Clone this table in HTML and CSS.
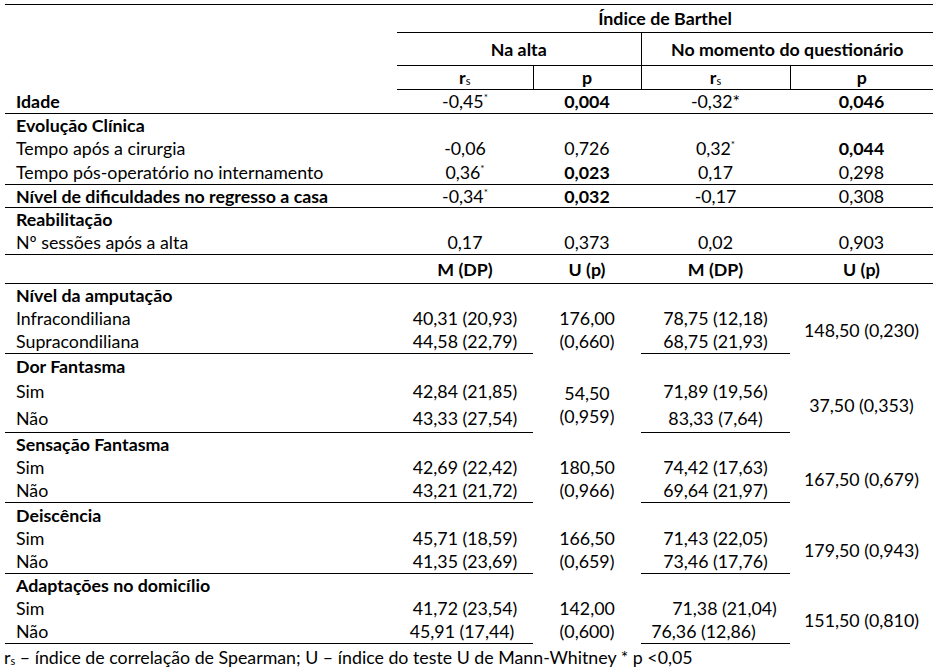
FILE: index.html
```html
<!DOCTYPE html>
<html lang="pt">
<head>
<meta charset="utf-8">
<title>Índice de Barthel</title>
<link rel="stylesheet" href="styles.css">
</head>
<body>
<div class="page">
<table class="stats">
  <colgroup>
    <col class="c0"><col class="c1"><col class="c2"><col class="c3"><col class="c4">
  </colgroup>
  <tr class="r-top h27">
    <td class="lbl" rowspan="3"></td>
    <td colspan="4" class="b bb">Índice de Barthel</td>
  </tr>
  <tr class="h32">
    <td colspan="2" class="b bb vr">Na alta</td>
    <td colspan="2" class="b bb">No momento do questionário</td>
  </tr>
  <tr class="h23 line">
    <td class="b vr">r<span class="sub">s</span></td>
    <td class="b vr">p</td>
    <td class="b vr">r<span class="sub">s</span></td>
    <td class="b">p</td>
  </tr>
  <tr class="h23 line">
    <td class="lbl b">Idade</td>
    <td>-0,45<sup>*</sup></td>
    <td class="b">0,004</td>
    <td>-0,32*</td>
    <td class="b">0,046</td>
  </tr>
  <tr class="h23">
    <td class="lbl b">Evolução Clínica</td><td></td><td></td><td></td><td></td>
  </tr>
  <tr class="h23">
    <td class="lbl">Tempo após a cirurgia</td>
    <td>-0,06</td><td>0,726</td><td>0,32<sup>*</sup></td><td class="b">0,044</td>
  </tr>
  <tr class="h24 line">
    <td class="lbl">Tempo pós-operatório no internamento</td>
    <td>0,36<sup>*</sup></td><td class="b">0,023</td><td>0,17</td><td>0,298</td>
  </tr>
  <tr class="h22 line">
    <td class="lbl b">Nível de dificuldades no regresso a casa</td>
    <td>-0,34<sup>*</sup></td><td class="b">0,032</td><td>-0,17</td><td>0,308</td>
  </tr>
  <tr class="h23">
    <td class="lbl b">Reabilitação</td><td></td><td></td><td></td><td></td>
  </tr>
  <tr class="h23 line">
    <td class="lbl">Nº sessões após a alta</td>
    <td>0,17</td><td>0,373</td><td>0,02</td><td>0,903</td>
  </tr>
  <tr class="h28 line">
    <td class="lbl"></td>
    <td class="b">M (DP)</td><td class="b">U (p)</td><td class="b">M (DP)</td><td class="b">U (p)</td>
  </tr>

  <tr class="h23">
    <td class="lbl b">Nível da amputação</td><td></td><td></td><td></td><td></td>
  </tr>
  <tr class="h23">
    <td class="lbl">Infracondiliana</td>
    <td>40,31 (20,93)</td>
    <td rowspan="2" class="stack">176,00<br>(0,660)</td>
    <td>78,75 (12,18)</td>
    <td rowspan="2">148,50 (0,230)</td>
  </tr>
  <tr class="h23 line">
    <td class="lbl">Supracondiliana</td>
    <td>44,58 (22,79)</td>
    <td>68,75 (21,93)</td>
  </tr>

  <tr class="h24">
    <td class="lbl b">Dor Fantasma</td><td></td><td></td><td></td><td></td>
  </tr>
  <tr class="h27">
    <td class="lbl">Sim</td>
    <td>42,84 (21,85)</td>
    <td rowspan="2" class="stack">54,50<br>(0,959)</td>
    <td>71,89 (19,56)</td>
    <td rowspan="2">37,50 (0,353)</td>
  </tr>
  <tr class="h27 line">
    <td class="lbl">Não</td>
    <td>43,33 (27,54)</td>
    <td>83,33 (7,64)</td>
  </tr>

  <tr class="h23">
    <td class="lbl b">Sensação Fantasma</td><td></td><td></td><td></td><td></td>
  </tr>
  <tr class="h23">
    <td class="lbl">Sim</td>
    <td>42,69 (22,42)</td>
    <td rowspan="2" class="stack">180,50<br>(0,966)</td>
    <td>74,42 (17,63)</td>
    <td rowspan="2">167,50 (0,679)</td>
  </tr>
  <tr class="h23 line">
    <td class="lbl">Não</td>
    <td>43,21 (21,72)</td>
    <td>69,64 (21,97)</td>
  </tr>

  <tr class="h24">
    <td class="lbl b">Deiscência</td><td></td><td></td><td></td><td></td>
  </tr>
  <tr class="h23">
    <td class="lbl">Sim</td>
    <td>45,71 (18,59)</td>
    <td rowspan="2" class="stack">166,50<br>(0,659)</td>
    <td>71,43 (22,05)</td>
    <td rowspan="2">179,50 (0,943)</td>
  </tr>
  <tr class="h23 line">
    <td class="lbl">Não</td>
    <td>41,35 (23,69)</td>
    <td>73,46 (17,76)</td>
  </tr>

  <tr class="h23">
    <td class="lbl b">Adaptações no domicílio</td><td></td><td></td><td></td><td></td>
  </tr>
  <tr class="h23">
    <td class="lbl">Sim</td>
    <td>41,72 (23,54)</td>
    <td rowspan="2" class="stack">142,00<br>(0,600)</td>
    <td class="nudge-r">71,38 (21,04)</td>
    <td rowspan="2">151,50 (0,810)</td>
  </tr>
  <tr class="h23 line">
    <td class="lbl">Não</td>
    <td class="nudge-l2">45,91 (17,44)</td>
    <td class="nudge-l">76,36 (12,86)</td>
  </tr>
</table>
<p class="note">r<span class="sub">s</span> – índice de correlação de Spearman; U – índice do teste U de Mann-Whitney * p &lt;0,05</p>
</div>
</body>
</html>
```

FILE: styles.css
```css
html, body {
  margin: 0;
  padding: 0;
  background: #ffffff;
}

body {
  font-family: Lato, "Open Sans", "Liberation Sans", sans-serif;
  font-size: 17.8px;
  color: #000000;
}

.page {
  padding-top: 4px;
}

.stats {
  margin-left: 5px;
  width: 928px;
  border-collapse: collapse;
  table-layout: fixed;
}

.c0 { width: 392px; }
.c1 { width: 136px; }
.c2 { width: 108px; }
.c3 { width: 149px; }
.c4 { width: 143px; }

.stats td {
  padding: 0;
  line-height: 21px;
  text-align: center;
  vertical-align: middle;
  white-space: nowrap;
}

.stats .lbl {
  text-align: left;
  padding-left: 11px;
}

.b { font-weight: 700; }

.r-top td { border-top: 1px solid #000; }
.bb { border-bottom: 1px solid #000; }
.vr { border-right: 1px solid #000; }
.line td { border-bottom: 1px solid #000; }

.h22 td { height: 22px; }
.h23 td { height: 23px; }
.h24 td { height: 24px; }
.h27 td { height: 27px; }
.h28 td { height: 28px; }
.h32 td { height: 32px; }

.stats td.stack { line-height: 23px; }

.sub {
  font-size: 11px;
  font-weight: 400;
  vertical-align: -1px;
  line-height: 0;
}

sup {
  font-size: 10px;
  line-height: 0;
  vertical-align: 7px;
}

.stats td.nudge-r { padding-left: 18px; }
.stats td.nudge-l { padding-right: 24px; }
.stats td.nudge-l2 { padding-right: 6px; }

.note {
  margin: 2px 0 0 4px;
  line-height: 23px;
}
```
